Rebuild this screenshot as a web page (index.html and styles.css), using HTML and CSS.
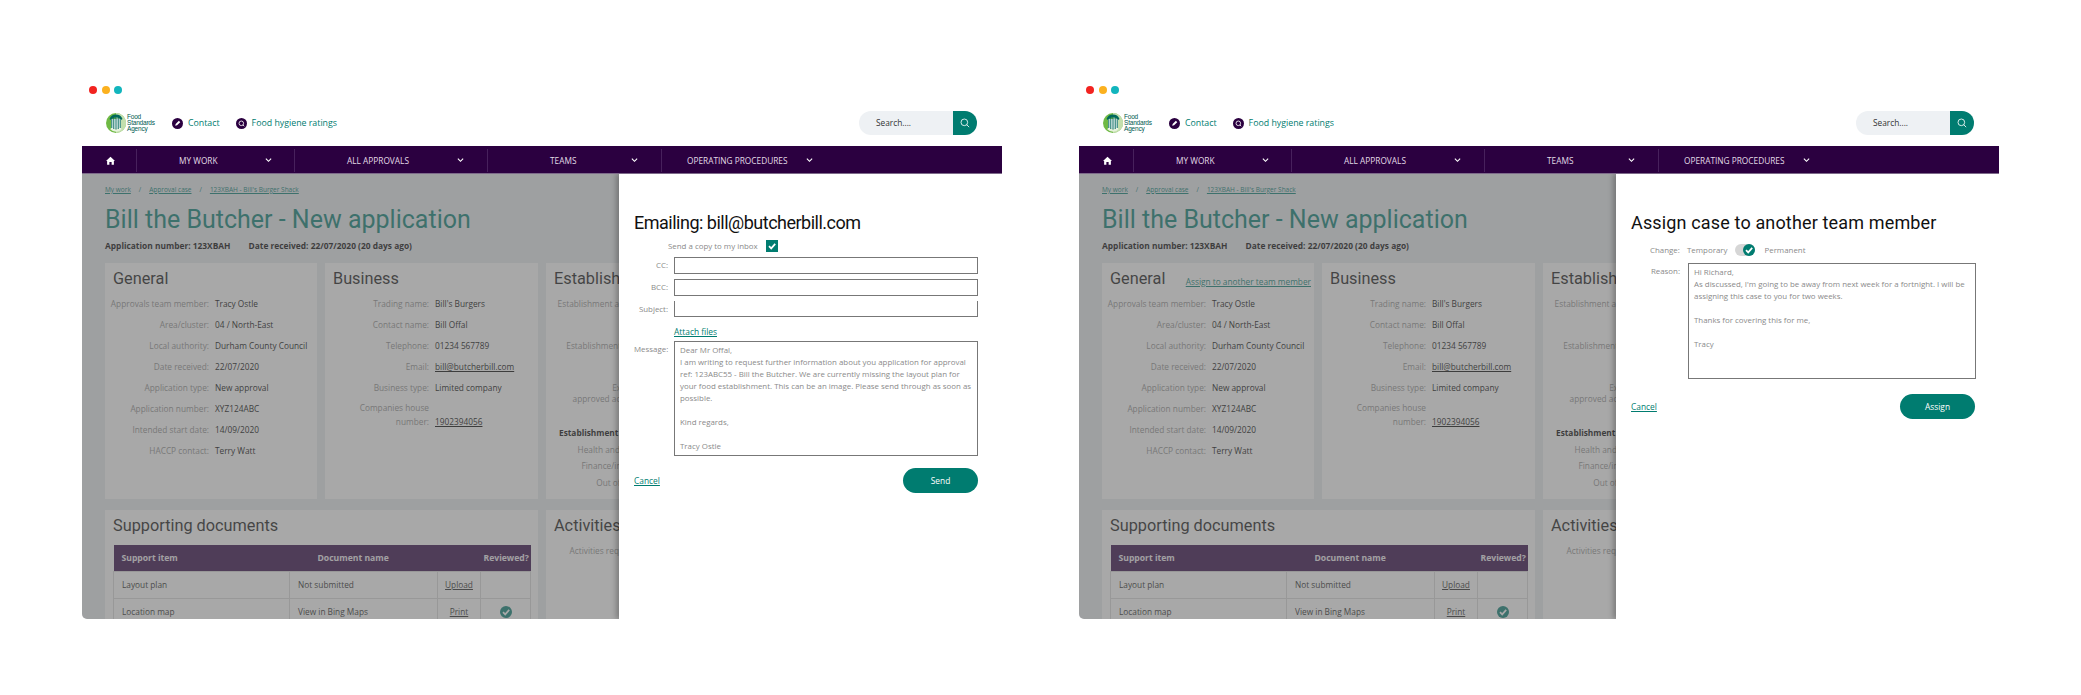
FILE: index.html
```html
<!DOCTYPE html>
<html lang="en">
<head>
    <meta charset="UTF-8">
    <title>Food Standards Agency - Approvals</title>
    <link rel="stylesheet" href="styles.css">
</head>
<body>
    <svg class="defs" width="0" height="0">
        <symbol id="fsa-logo" viewBox="0 0 20 20">
            <circle cx="10" cy="10" r="10" fill="#6fb944"/>
            <path d="M10 0A10 10 0 0 1 14 19.200L10 20z" fill="#c3dfad"/>
            <path d="M4 16A8 8 0 0 0 16 16L14 15H6z" fill="#e6f2dc"/>
            <path d="M3.500 6A7 7 0 0 1 16.500 6L15 7A6 6 0 0 0 5 7z" fill="#00695c"/>
            <path d="M5 6H15V15.500H5z" fill="#fff"/>
            <path d="M5.800 5V15M7.800 4V16M10 3.500V16.500M12.200 4V16M14.200 5V15" stroke="#00695c" stroke-width="1" fill="none"/>
        </symbol>
        <symbol id="chevron" viewBox="0 0 8 6">
            <path d="M1 1.500L4 4.500L7 1.500" stroke="#fff" stroke-width="1.300" fill="none"/>
        </symbol>
        <symbol id="home" viewBox="0 0 12 12">
            <path d="M6 1L12 6.500H10.500V11.500H7.500V8H4.500V11.500H1.500V6.500H0z" fill="#fff"/>
        </symbol>
        <symbol id="pencil-badge" viewBox="0 0 12 12">
            <circle cx="6" cy="6" r="6" fill="#2b0040"/>
            <path d="M3.500 8.500L4 6.500L7.500 3L9 4.500L5.500 8z" fill="#fff"/>
        </symbol>
        <symbol id="search-badge" viewBox="0 0 12 12">
            <circle cx="6" cy="6" r="6" fill="#2b0040"/>
            <circle cx="5.800" cy="5.800" r="2.500" stroke="#fff" stroke-width=".9" fill="none"/>
            <path d="M7.600 7.600L9 9" stroke="#fff" stroke-width=".9"/>
        </symbol>
        <symbol id="search" viewBox="0 0 12 12">
            <circle cx="5.200" cy="5.200" r="4" stroke="#fff" stroke-width="1" fill="none"/>
            <path d="M8 8L11 11" stroke="#fff" stroke-width="1"/>
        </symbol>
        <symbol id="tick" viewBox="0 0 12 12">
            <path d="M3 6.200L5.200 8.400L9.200 3.900" stroke="#fff" stroke-width="1.700" fill="none"/>
        </symbol>
    </svg>

    <div class="mocks">
        <!-- Email panel -->
        <section class="mock">
            <div class="dots"><i class="dot red"></i><i class="dot amber"></i><i class="dot cyan"></i></div>
            <header class="topbar">
                <div class="logo">
                    <svg class="logo-mark"><use href="#fsa-logo"/></svg>
                    <span class="logo-text">Food<br>Standards<br>Agency</span>
                </div>
                <a class="top-link"><svg class="badge"><use href="#pencil-badge"/></svg>Contact</a>
                <a class="top-link"><svg class="badge"><use href="#search-badge"/></svg>Food hygiene ratings</a>
                <div class="search">
                    <span class="search-text">Search....</span>
                    <span class="search-btn"><svg class="search-icon"><use href="#search"/></svg></span>
                </div>
            </header>
            <nav class="nav">
                <a class="nav-home"><svg class="home-icon"><use href="#home"/></svg></a>
                <a class="nav-item item-work"><span>MY WORK</span><svg class="chev"><use href="#chevron"/></svg></a>
                <a class="nav-item item-all"><span>ALL APPROVALS</span><svg class="chev"><use href="#chevron"/></svg></a>
                <a class="nav-item item-teams"><span>TEAMS</span><svg class="chev"><use href="#chevron"/></svg></a>
                <a class="nav-item item-ops"><span>OPERATING PROCEDURES</span><svg class="chev"><use href="#chevron"/></svg></a>
            </nav>
            <main class="main">
                <div class="crumbs"><a>My work</a><span>/</span><a>Approval case</a><span>/</span><a>123XBAH - Bill's Burger Shack</a></div>
                <h1 class="page-title">Bill the Butcher - New application</h1>
                <div class="meta"><b>Application number: 123XBAH</b><b>Date received: 22/07/2020 (20 days ago)</b></div>
                <div class="cards">
                    <div class="card">
                        <h2 class="card-title">General</h2>
                        <dl class="rows">
                            <div class="row"><dt>Approvals team member:</dt><dd>Tracy Ostle</dd></div>
                            <div class="row"><dt>Area/cluster:</dt><dd>04 / North-East</dd></div>
                            <div class="row"><dt>Local authority:</dt><dd>Durham County Council</dd></div>
                            <div class="row"><dt>Date received:</dt><dd>22/07/2020</dd></div>
                            <div class="row"><dt>Application type:</dt><dd>New approval</dd></div>
                            <div class="row"><dt>Application number:</dt><dd>XYZ124ABC</dd></div>
                            <div class="row"><dt>Intended start date:</dt><dd>14/09/2020</dd></div>
                            <div class="row"><dt>HACCP contact:</dt><dd>Terry Watt</dd></div>
                        </dl>
                    </div>
                    <div class="card">
                        <h2 class="card-title">Business</h2>
                        <dl class="rows">
                            <div class="row"><dt>Trading name:</dt><dd>Bill's Burgers</dd></div>
                            <div class="row"><dt>Contact name:</dt><dd>Bill Offal</dd></div>
                            <div class="row"><dt>Telephone:</dt><dd>01234 567789</dd></div>
                            <div class="row"><dt>Email:</dt><dd><u>bill@butcherbill.com</u></dd></div>
                            <div class="row"><dt>Business type:</dt><dd>Limited company</dd></div>
                            <div class="row row-tall"><dt>Companies house<br>number:</dt><dd><u>1902394056</u></dd></div>
                        </dl>
                    </div>
                    <div class="card card-est">
                        <h2 class="card-title">Establishment</h2>
                        <dl class="rows rows-est">
                            <div class="row"><dt>Establishment address:</dt></div>
                            <div class="row row-gap"><dt>Establishment name:</dt></div>
                            <div class="row row-two"><dt>Expected<br>approved activities:</dt></div>
                        </dl>
                        <div class="est-sub">Establishment contacts</div>
                        <dl class="rows rows-short">
                            <div class="row"><dt>Health and safety:</dt></div>
                            <div class="row"><dt>Finance/invoices:</dt></div>
                            <div class="row"><dt>Out of hours:</dt></div>
                        </dl>
                    </div>
                    <div class="card card-docs">
                        <h2 class="card-title">Supporting documents</h2>
                        <table class="docs">
                            <colgroup><col class="col-item"><col class="col-name"><col class="col-act"><col class="col-rev"></colgroup>
                            <tr><th>Support item</th><th colspan="2">Document name</th><th>Reviewed?</th></tr>
                            <tr><td>Layout plan</td><td>Not submitted</td><td class="act"><u>Upload</u></td><td></td></tr>
                            <tr><td>Location map</td><td>View in Bing Maps</td><td class="act"><u>Print</u></td><td class="act"><svg class="reviewed"><use href="#tick"/></svg></td></tr>
                        </table>
                    </div>
                    <div class="card card-act">
                        <h2 class="card-title">Activities</h2>
                        <p class="act-note">Activities required</p>
                    </div>
                </div>
                <div class="shade"></div>
                <aside class="panel">
                    <h2 class="panel-title title-email">Emailing: bill@butcherbill.com</h2>
                    <div class="copy-row"><span>Send a copy to my inbox</span><i class="check"><svg class="check-icon"><use href="#tick"/></svg></i></div>
                    <div class="field"><label>CC:</label><span class="input"></span></div>
                    <div class="field"><label>BCC:</label><span class="input"></span></div>
                    <div class="field"><label>Subject:</label><span class="input no-top"></span></div>
                    <div class="field attach"><span></span><a class="link">Attach files</a></div>
                    <div class="field"><label>Message:</label>
                        <div class="textbox msg-box">Dear Mr Offal,<br>I am writing to request further information about you application for approval ref: 123ABC55 - Bill the Butcher. We are currently missing the layout plan for your food establishment. This can be an image. Please send through as soon as possible.<br><br>Kind regards,<br><br>Tracy Ostle</div>
                    </div>
                    <div class="panel-foot"><a class="link">Cancel</a><a class="btn">Send</a></div>
                </aside>
            </main>
        </section>

        <!-- Assign panel -->
        <section class="mock">
            <div class="dots"><i class="dot red"></i><i class="dot amber"></i><i class="dot cyan"></i></div>
            <header class="topbar">
                <div class="logo">
                    <svg class="logo-mark"><use href="#fsa-logo"/></svg>
                    <span class="logo-text">Food<br>Standards<br>Agency</span>
                </div>
                <a class="top-link"><svg class="badge"><use href="#pencil-badge"/></svg>Contact</a>
                <a class="top-link"><svg class="badge"><use href="#search-badge"/></svg>Food hygiene ratings</a>
                <div class="search">
                    <span class="search-text">Search....</span>
                    <span class="search-btn"><svg class="search-icon"><use href="#search"/></svg></span>
                </div>
            </header>
            <nav class="nav">
                <a class="nav-home"><svg class="home-icon"><use href="#home"/></svg></a>
                <a class="nav-item item-work"><span>MY WORK</span><svg class="chev"><use href="#chevron"/></svg></a>
                <a class="nav-item item-all"><span>ALL APPROVALS</span><svg class="chev"><use href="#chevron"/></svg></a>
                <a class="nav-item item-teams"><span>TEAMS</span><svg class="chev"><use href="#chevron"/></svg></a>
                <a class="nav-item item-ops"><span>OPERATING PROCEDURES</span><svg class="chev"><use href="#chevron"/></svg></a>
            </nav>
            <main class="main">
                <div class="crumbs"><a>My work</a><span>/</span><a>Approval case</a><span>/</span><a>123XBAH - Bill's Burger Shack</a></div>
                <h1 class="page-title">Bill the Butcher - New application</h1>
                <div class="meta"><b>Application number: 123XBAH</b><b>Date received: 22/07/2020 (20 days ago)</b></div>
                <div class="cards">
                    <div class="card">
                        <div class="card-head"><h2 class="card-title">General</h2><a class="assign-link">Assign to another team member</a></div>
                        <dl class="rows">
                            <div class="row"><dt>Approvals team member:</dt><dd>Tracy Ostle</dd></div>
                            <div class="row"><dt>Area/cluster:</dt><dd>04 / North-East</dd></div>
                            <div class="row"><dt>Local authority:</dt><dd>Durham County Council</dd></div>
                            <div class="row"><dt>Date received:</dt><dd>22/07/2020</dd></div>
                            <div class="row"><dt>Application type:</dt><dd>New approval</dd></div>
                            <div class="row"><dt>Application number:</dt><dd>XYZ124ABC</dd></div>
                            <div class="row"><dt>Intended start date:</dt><dd>14/09/2020</dd></div>
                            <div class="row"><dt>HACCP contact:</dt><dd>Terry Watt</dd></div>
                        </dl>
                    </div>
                    <div class="card">
                        <h2 class="card-title">Business</h2>
                        <dl class="rows">
                            <div class="row"><dt>Trading name:</dt><dd>Bill's Burgers</dd></div>
                            <div class="row"><dt>Contact name:</dt><dd>Bill Offal</dd></div>
                            <div class="row"><dt>Telephone:</dt><dd>01234 567789</dd></div>
                            <div class="row"><dt>Email:</dt><dd><u>bill@butcherbill.com</u></dd></div>
                            <div class="row"><dt>Business type:</dt><dd>Limited company</dd></div>
                            <div class="row row-tall"><dt>Companies house<br>number:</dt><dd><u>1902394056</u></dd></div>
                        </dl>
                    </div>
                    <div class="card card-est">
                        <h2 class="card-title">Establishment</h2>
                        <dl class="rows rows-est">
                            <div class="row"><dt>Establishment address:</dt></div>
                            <div class="row row-gap"><dt>Establishment name:</dt></div>
                            <div class="row row-two"><dt>Expected<br>approved activities:</dt></div>
                        </dl>
                        <div class="est-sub">Establishment contacts</div>
                        <dl class="rows rows-short">
                            <div class="row"><dt>Health and safety:</dt></div>
                            <div class="row"><dt>Finance/invoices:</dt></div>
                            <div class="row"><dt>Out of hours:</dt></div>
                        </dl>
                    </div>
                    <div class="card card-docs">
                        <h2 class="card-title">Supporting documents</h2>
                        <table class="docs">
                            <colgroup><col class="col-item"><col class="col-name"><col class="col-act"><col class="col-rev"></colgroup>
                            <tr><th>Support item</th><th colspan="2">Document name</th><th>Reviewed?</th></tr>
                            <tr><td>Layout plan</td><td>Not submitted</td><td class="act"><u>Upload</u></td><td></td></tr>
                            <tr><td>Location map</td><td>View in Bing Maps</td><td class="act"><u>Print</u></td><td class="act"><svg class="reviewed"><use href="#tick"/></svg></td></tr>
                        </table>
                    </div>
                    <div class="card card-act">
                        <h2 class="card-title">Activities</h2>
                        <p class="act-note">Activities required</p>
                    </div>
                </div>
                <div class="shade"></div>
                <aside class="panel">
                    <h2 class="panel-title title-assign">Assign case to another team member</h2>
                    <div class="change-row">
                        <label>Change:</label>
                        <span>Temporary</span>
                        <i class="toggle"><i class="knob"><svg class="check-icon"><use href="#tick"/></svg></i></i>
                        <span>Permanent</span>
                    </div>
                    <div class="field reason"><label>Reason:</label>
                        <div class="textbox reason-box">Hi Richard,<br>As discussed, I'm going to be away from next week for a fortnight. I will be assigning this case to you for two weeks.<br><br>Thanks for covering this for me,<br><br>Tracy</div>
                    </div>
                    <div class="panel-foot reason-foot"><a class="link">Cancel</a><a class="btn">Assign</a></div>
                </aside>
            </main>
        </section>
    </div>
</body>
</html>
```

FILE: styles.css
```css
* {
    box-sizing: border-box;
}
html, body {
    margin: 0;
    height: 695px;
    overflow: hidden;
    background: #fff;
}
body {
    font-family: "Open Sans", Arial, sans-serif;
    font-size: 8.3px;
    color: #000;
}
.defs {
    position: absolute;
}
.mocks {
    display: flex;
    gap: 77px;
    padding: 86px 0 0 82px;
}
.mock {
    width: 920px;
    flex: none;
}

/* window dots */
.dots {
    display: flex;
    gap: 4.500px;
    height: 8px;
    padding-left: 7px;
}
.dot {
    display: block;
    width: 8px;
    height: 8px;
    border-radius: 50%;
}
.red { background: #f22320; }
.amber { background: #fbb11f; }
.cyan { background: #12b5bd; }

/* top bar */
.topbar {
    display: flex;
    align-items: center;
    height: 52px;
    padding: 5px 25px 0 24px;
}
.logo {
    display: flex;
    align-items: center;
    width: 66px;
}
.logo-mark {
    width: 20px;
    height: 20px;
    flex: none;
}
.logo-text {
    margin-left: 1px;
    font-family: "Liberation Sans", Arial, sans-serif;
    font-size: 6.500px;
    line-height: 6px;
    letter-spacing: -.2px;
    color: #00594f;
}
.top-link {
    display: flex;
    align-items: center;
    margin-right: 16px;
    padding-top: 1px;
    font-size: 8.800px;
    color: #007c70;
}
.badge {
    width: 11px;
    height: 11px;
    margin-right: 5px;
}
.search {
    display: flex;
    align-items: center;
    justify-content: space-between;
    width: 118px;
    height: 24px;
    margin-left: auto;
    border-radius: 12px;
    background: #eef1f4;
    overflow: hidden;
}
.search-text {
    padding-left: 17px;
    font-size: 8.300px;
    color: #333;
}
.search-btn {
    display: flex;
    align-items: center;
    justify-content: center;
    width: 24px;
    height: 24px;
    background: #007c70;
}
.search-icon {
    width: 10px;
    height: 10px;
}

/* nav */
.nav {
    display: flex;
    align-items: center;
    height: 28px;
    padding-top: 1px;
    background: #2b0040;
    border-bottom: 1px solid #7d6a8a;
    color: #e2dbe6;
    font-size: 8.300px;
    white-space: nowrap;
}
.nav-home {
    display: flex;
    align-items: center;
    justify-content: center;
    width: 55px;
    height: 23px;
    padding-left: 3px;
    border-right: 1px solid #47215c;
}
.home-icon {
    width: 9px;
    height: 9px;
}
.nav-item {
    display: flex;
    align-items: center;
    justify-content: space-between;
    height: 23px;
    border-right: 1px solid #47215c;
}
.item-work { width: 158px; padding: 0 22px 0 42px; }
.item-all { width: 193px; padding: 0 23px 0 52px; }
.item-teams { width: 174px; padding: 0 23px 0 62px; }
.item-ops { width: 170px; padding: 0 0 0 25px; border-right: 0; justify-content: flex-start; gap: 18px; }
.chev {
    width: 7px;
    height: 6px;
}

/* page under the panel */
.main {
    position: relative;
    height: 445px;
    padding: 10px 0 0 23px;
    background: #e8ebef;
    overflow: hidden;
    border-radius: 0 0 0 5px;
}
.crumbs {
    display: flex;
    gap: 8px;
    height: 12px;
    font-size: 6.500px;
    line-height: 12px;
    color: #007c70;
}
.crumbs a {
    text-decoration: underline;
}
.page-title {
    margin: 5px 0 0;
    height: 36px;
    font-family: Roboto, Lato, sans-serif;
    font-weight: 400;
    font-size: 25px;
    line-height: 38px;
    color: #007c70;
}
.meta {
    display: flex;
    gap: 18px;
    margin-top: 2px;
    height: 14px;
    font-size: 8.400px;
    line-height: 14px;
}
.cards {
    display: grid;
    grid-template-columns: 212px 213px 300px;
    grid-template-rows: 236px 120px;
    gap: 11px 8px;
    margin-top: 10px;
}
.card {
    padding: 5px 8px;
    background: #fff;
}
.card-title {
    margin: 0;
    height: 20px;
    font-family: Roboto, Lato, sans-serif;
    font-weight: 400;
    font-size: 16.300px;
    line-height: 22px;
    color: #111;
}
.card-head {
    display: flex;
    align-items: center;
    justify-content: space-between;
    height: 20px;
    margin-right: -5px;
}
.assign-link {
    padding-top: 6px;
    font-size: 8.300px;
    color: #007c70;
    text-decoration: underline;
    white-space: nowrap;
}
.rows {
    margin: 1.500px 0 0 -8px;
}
.row {
    display: flex;
    gap: 6px;
    align-items: flex-end;
    height: 21px;
    line-height: 14px;
}
.row dt {
    width: 104px;
    flex: none;
    text-align: right;
    color: #8c8c8c;
}
.row dd {
    margin: 0;
    color: #000;
}
.row-tall {
    height: 34px;
}
.card-est {
    grid-row: 1;
    grid-column: 3;
}
.rows-est .row dt,
.rows-short .row dt {
    width: 101.500px;
}
.rows-est .row-gap {
    margin-top: 21.500px;
}
.rows-est .row-two {
    height: 30px;
    margin-top: 20.500px;
    line-height: 11px;
}
.est-sub {
    margin: 23.500px 0 0 5px;
    font-weight: 700;
    font-size: 8.300px;
    line-height: 12px;
    color: #000;
}
.rows-short {
    margin-top: 1px;
}
.rows-short .row {
    height: 16.500px;
}
.card-docs {
    grid-column: 1 / span 2;
}
.docs {
    width: 417px;
    margin-top: 10px;
    border-collapse: collapse;
    table-layout: fixed;
    color: #222;
}
.col-item { width: 176px; }
.col-name { width: 148px; }
.col-act { width: 43px; }
.col-rev { width: 50px; }
.docs th {
    height: 26px;
    padding: 0 8px;
    background: #2b0040;
    color: #f0ecf2;
    font-size: 8.600px;
    text-align: left;
    white-space: nowrap;
}
.docs th:nth-child(2) {
    padding-left: 28px;
}
.docs th:last-child {
    padding: 0 3px;
}
.docs td {
    height: 27px;
    padding: 0 8px;
    border: 1px solid #d8d8d8;
    white-space: nowrap;
}
.docs .act {
    padding: 0;
    text-align: center;
}
.reviewed {
    display: block;
    width: 12px;
    height: 12px;
    margin: 0 auto;
    border-radius: 50%;
    background: #007c70;
}
.act-note {
    margin: 10px 0 0 15.500px;
    color: #8c8c8c;
}
.shade {
    position: absolute;
    inset: 0;
    background: rgba(105, 105, 105, .58);
}

/* slide-in panel */
.panel {
    position: absolute;
    top: 0;
    right: 0;
    bottom: 0;
    width: 383px;
    padding: 38px 24px 0 15px;
    background: #fff;
    box-shadow: -3px 0 5px rgba(0, 0, 0, .25);
    color: #8a8a8a;
    font-size: 7.900px;
}
.panel-title {
    margin: 0;
    height: 22px;
    font-family: Roboto, Lato, sans-serif;
    font-weight: 400;
    font-size: 18px;
    line-height: 22px;
    color: #111;
}
.title-email {
    letter-spacing: -.5px;
}
.title-assign {
    letter-spacing: .15px;
}
.copy-row {
    display: flex;
    align-items: center;
    gap: 8px;
    height: 12px;
    margin: 6px 0 5px 34px;
}
.check {
    display: block;
    width: 12px;
    height: 12px;
    background: #007c70;
}
.check-icon {
    display: block;
    width: 12px;
    height: 12px;
}
.field {
    display: grid;
    grid-template-columns: 34px 1fr;
    gap: 6px;
    margin-bottom: 5px;
    line-height: 16px;
}
.field label {
    text-align: right;
}
.input {
    display: block;
    height: 17px;
    border: 1px solid #777;
}
.no-top {
    border-top: 0;
    height: 16px;
}
.attach {
    margin-top: 7px;
    margin-bottom: 1px;
}
.link {
    font-size: 8.400px;
    color: #007c70;
    text-decoration: underline;
}
.textbox {
    padding: 2px 5px;
    border: 1px solid #777;
    line-height: 12px;
    color: #8a8a8a;
}
.msg-box {
    height: 115px;
}
.panel-foot {
    display: flex;
    align-items: center;
    justify-content: space-between;
    margin-top: 12px;
}
.btn {
    display: block;
    width: 75px;
    height: 25px;
    border-radius: 13px;
    background: #007c70;
    color: #fff;
    font-size: 8.400px;
    line-height: 25px;
    text-align: center;
}
.change-row {
    display: flex;
    align-items: center;
    height: 12px;
    margin: 10px 0 7px 19px;
}
.change-row label {
    width: 37px;
}
.toggle {
    display: block;
    position: relative;
    width: 20px;
    height: 12px;
    margin: 0 9px 0 8px;
    border-radius: 6px;
    background: #d6d6d6;
}
.knob {
    display: block;
    position: absolute;
    top: 0;
    right: 0;
    width: 12px;
    height: 12px;
    border-radius: 50%;
    background: #007c70;
}
.reason {
    grid-template-columns: 49px 1fr;
    gap: 8px;
    margin-bottom: 0;
}
.reason-box {
    height: 116px;
    width: 288px;
}
.reason-foot {
    margin-top: 15px;
}
```
